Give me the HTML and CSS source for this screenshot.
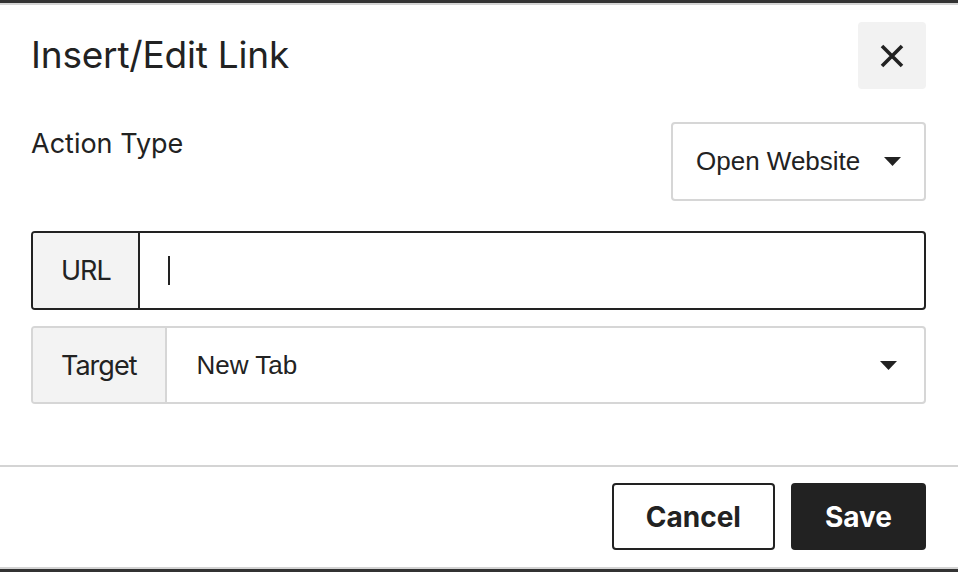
FILE: index.html
```html
<!DOCTYPE html>
<html lang="en">
<head>
<meta charset="utf-8">
<title>Insert/Edit Link</title>
<link rel="stylesheet" href="styles.css">
</head>
<body>
<div class="modal">
  <div class="modal-header">
    <h1 class="modal-title">Insert/Edit Link</h1>
    <button class="close-btn" aria-label="Close">
      <svg width="24" height="24" viewBox="0 0 24 24" aria-hidden="true">
        <path d="M2 2 L22 22 M22 2 L2 22" stroke="#222" stroke-width="3.6" fill="none"/>
      </svg>
    </button>
  </div>
  <div class="modal-body">
    <div class="action-row">
      <div class="field-label">Action Type</div>
      <div class="select-box action-select">
        <span class="select-text">Open Website</span>
        <svg class="caret-down" width="17" height="9" viewBox="0 0 17 9" aria-hidden="true"><polygon points="0,0 17,0 8.5,9" fill="#222"/></svg>
      </div>
    </div>
    <div class="input-group focused">
      <div class="addon">URL</div>
      <div class="input-area"><span class="text-cursor"></span></div>
    </div>
    <div class="input-group">
      <div class="addon">Target</div>
      <div class="input-area select-area">
        <span class="select-text">New Tab</span>
        <svg class="caret-down" width="17" height="9" viewBox="0 0 17 9" aria-hidden="true"><polygon points="0,0 17,0 8.5,9" fill="#222"/></svg>
      </div>
    </div>
  </div>
  <div class="modal-footer">
    <button class="btn btn-outline">Cancel</button>
    <button class="btn btn-dark">Save</button>
  </div>
</div>
</body>
</html>
```

FILE: styles.css
```css
* { box-sizing: border-box; }

html, body {
  margin: 0;
  padding: 0;
}

body {
  background: #333333;
  width: 958px;
  height: 572px;
  overflow: hidden;
  padding-top: 3px;
  font-family: Inter, "Noto Sans", sans-serif;
  color: #222222;
}

.modal {
  background: #ffffff;
  border-top: 2px solid #d4d4d4;
  border-bottom: 2px solid #d4d4d4;
  display: flex;
  flex-direction: column;
}

.modal-header {
  display: flex;
  align-items: center;
  justify-content: space-between;
  padding: 17px 32px 0 31px;
}

.modal-title {
  margin: 0;
  font-size: 37px;
  font-weight: 400;
  line-height: 1.2;
  letter-spacing: -0.2px;
}

.close-btn {
  width: 68px;
  height: 67px;
  border: none;
  border-radius: 4px;
  background: #f2f2f2;
  display: flex;
  align-items: center;
  justify-content: center;
  padding: 0;
}

.modal-body {
  padding: 33px 32px 61px 31px;
  display: flex;
  flex-direction: column;
}

.action-row {
  display: flex;
  justify-content: space-between;
  align-items: flex-start;
  margin-bottom: 30px;
}

.field-label {
  font-size: 27px;
  line-height: 1.2;
  padding-top: 6px;
}

.select-box {
  display: flex;
  align-items: center;
  height: 79px;
  border: 2px solid #d6d6d6;
  border-radius: 4px;
}

.action-select {
  width: 255px;
  padding: 0 23px 0 23px;
  justify-content: space-between;
}

.select-text {
  font-family: "Liberation Sans", Arial, sans-serif;
  font-size: 26px;
}

.caret-down {
  display: block;
  flex: none;
}

.input-group {
  display: flex;
  height: 79px;
  border: 2px solid #d6d6d6;
  border-radius: 4px;
  overflow: hidden;
}

.input-group + .input-group {
  margin-top: 16px;
  height: 78px;
}

.input-group.focused {
  border-color: #222222;
}

.addon {
  display: flex;
  align-items: center;
  background: #f3f3f3;
  padding: 0 29px 0 28px;
  border-right: 2px solid #d6d6d6;
  font-size: 27px;
  letter-spacing: -1px;
}

.focused .addon {
  border-right-color: #222222;
  padding-right: 27px;
}

.input-area {
  flex: 1;
  display: flex;
  align-items: center;
  padding: 0 27px 0 28px;
}

.select-area {
  justify-content: space-between;
  padding-left: 29px;
}

.text-cursor {
  display: block;
  width: 2px;
  height: 29px;
  background: #222222;
}

.modal-footer {
  border-top: 2px solid #d4d4d4;
  padding: 16px 32px 17px 31px;
  display: flex;
  justify-content: flex-end;
  gap: 16px;
}

.btn {
  height: 67px;
  padding: 0 32px;
  border-radius: 4px;
  font-family: Inter, "Noto Sans", sans-serif;
  font-size: 28px;
  font-weight: 700;
  border: 2px solid #222222;
}

.btn-outline {
  background: #ffffff;
  color: #222222;
}

.btn-dark {
  background: #222222;
  color: #ffffff;
}
```
